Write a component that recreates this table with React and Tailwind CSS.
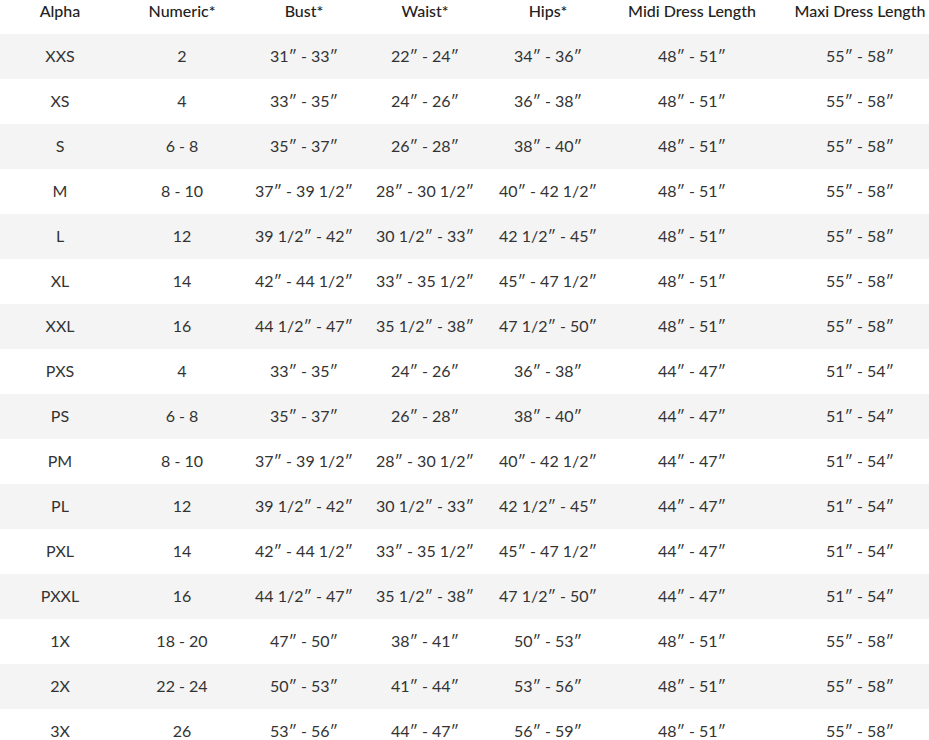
import React from "react";

const rows = [
  ["XXS", "2", "31″ - 33″", "22″ - 24″", "34″ - 36″", "48″ - 51″", "55″ - 58″"],
  ["XS", "4", "33″ - 35″", "24″ - 26″", "36″ - 38″", "48″ - 51″", "55″ - 58″"],
  ["S", "6 - 8", "35″ - 37″", "26″ - 28″", "38″ - 40″", "48″ - 51″", "55″ - 58″"],
  ["M", "8 - 10", "37″ - 39 1/2″", "28″ - 30 1/2″", "40″ - 42 1/2″", "48″ - 51″", "55″ - 58″"],
  ["L", "12", "39 1/2″ - 42″", "30 1/2″ - 33″", "42 1/2″ - 45″", "48″ - 51″", "55″ - 58″"],
  ["XL", "14", "42″ - 44 1/2″", "33″ - 35 1/2″", "45″ - 47 1/2″", "48″ - 51″", "55″ - 58″"],
  ["XXL", "16", "44 1/2″ - 47″", "35 1/2″ - 38″", "47 1/2″ - 50″", "48″ - 51″", "55″ - 58″"],
  ["PXS", "4", "33″ - 35″", "24″ - 26″", "36″ - 38″", "44″ - 47″", "51″ - 54″"],
  ["PS", "6 - 8", "35″ - 37″", "26″ - 28″", "38″ - 40″", "44″ - 47″", "51″ - 54″"],
  ["PM", "8 - 10", "37″ - 39 1/2″", "28″ - 30 1/2″", "40″ - 42 1/2″", "44″ - 47″", "51″ - 54″"],
  ["PL", "12", "39 1/2″ - 42″", "30 1/2″ - 33″", "42 1/2″ - 45″", "44″ - 47″", "51″ - 54″"],
  ["PXL", "14", "42″ - 44 1/2″", "33″ - 35 1/2″", "45″ - 47 1/2″", "44″ - 47″", "51″ - 54″"],
  ["PXXL", "16", "44 1/2″ - 47″", "35 1/2″ - 38″", "47 1/2″ - 50″", "44″ - 47″", "51″ - 54″"],
  ["1X", "18 - 20", "47″ - 50″", "38″ - 41″", "50″ - 53″", "48″ - 51″", "55″ - 58″"],
  ["2X", "22 - 24", "50″ - 53″", "41″ - 44″", "53″ - 56″", "48″ - 51″", "55″ - 58″"],
  ["3X", "26", "53″ - 56″", "44″ - 47″", "56″ - 59″", "48″ - 51″", "55″ - 58″"],
];

const headers = ["Alpha", "Numeric*", "Bust*", "Waist*", "Hips*", "Midi Dress Length", "Maxi Dress Length"];
const widths = ["w-[120px]", "w-[124px]", "w-[120px]", "w-[122px]", "w-[124px]", "w-[164px]", "w-[172px]"];

export default function App() {
  return (
    <div className="w-[929px] h-[740px] overflow-hidden bg-white text-[#333] text-[16px]" style={{ fontFamily: "Lato, 'Noto Sans', sans-serif" }}>
      <div className="flex h-[34px] w-max text-[#222] font-medium">
        {headers.map((h, i) => (
          <div key={h} className={`${widths[i]} shrink-0 text-center leading-[22px] whitespace-nowrap`}>{h}</div>
        ))}
      </div>
      {rows.map((r, ri) => (
        <div key={ri} className={`flex h-[45px] w-max items-center pb-[2px] ${ri % 2 === 0 ? "bg-[#f4f4f4]" : "bg-white"}`}>
          {r.map((c, i) => (
            <div key={i} className={`${widths[i]} shrink-0 text-center whitespace-nowrap`}>{c}</div>
          ))}
        </div>
      ))}
    </div>
  );
}
